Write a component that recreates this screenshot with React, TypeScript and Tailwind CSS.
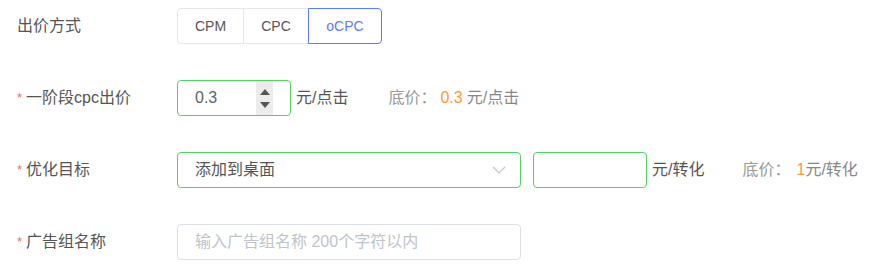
import { useState } from 'react';

const FONT = '"Liberation Sans", "Noto Sans CJK SC", sans-serif';

const MODES = [
  { key: 'CPM', w: 'w-[67px]' },
  { key: 'CPC', w: 'w-[66px]' },
  { key: 'oCPC', w: 'w-[74px]' },
];

function Label({ text, required }: { text: string; required?: boolean }) {
  return (
    <div className="flex w-[177px] shrink-0 items-center pl-[17px] text-[16px] text-[#555]">
      {required && <span className="mr-[4px] text-[13px] text-[#f56c6c]">*</span>}
      <span>{text}</span>
    </div>
  );
}

function Spinner() {
  return (
    <div className="flex h-full w-[17px] flex-col items-center justify-center gap-[7px] bg-[#ececec]">
      <svg width="10" height="6" viewBox="0 0 10 6">
        <path d="M5 0 L10 6 L0 6 Z" fill="#555" />
      </svg>
      <svg width="10" height="6" viewBox="0 0 10 6">
        <path d="M0 0 L10 0 L5 6 Z" fill="#555" />
      </svg>
    </div>
  );
}

export default function App() {
  const [mode, setMode] = useState('oCPC');

  return (
    <div className="flex flex-col gap-[36px] bg-white pt-[8px]" style={{ fontFamily: FONT }}>
      <div className="flex h-[36px] items-center">
        <Label text="出价方式" />
        <div className="flex h-full">
          {MODES.map((m, i) => {
            const active = m.key === mode;
            return (
              <button
                key={m.key}
                type="button"
                onClick={() => setMode(m.key)}
                className={`${m.w} ${i > 0 ? '-ml-px' : 'rounded-l-[4px]'} ${
                  i === MODES.length - 1 ? 'rounded-r-[4px]' : ''
                } ${
                  active
                    ? 'relative z-10 border-[#5b7bf8] text-[#5b7bf8]'
                    : 'border-[#e4e6eb] text-[#555]'
                } h-full border bg-white text-[14px]`}
              >
                {m.key}
              </button>
            );
          })}
        </div>
      </div>

      <div className="flex h-[36px] items-center">
        <Label text="一阶段cpc出价" required />
        <div className="flex h-full w-[114px] items-center rounded-[4px] border border-[#55d163] pl-[17px] pr-[17px]">
          <span className="flex-1 text-[16px] text-[#606266]">0.3</span>
          <Spinner />
        </div>
        <span className="ml-[5px] text-[16px] text-[#555]">元/点击</span>
        <span className="ml-[40px] text-[16px] text-[#999]">底价：</span>
        <span className="ml-[4px] text-[16px] text-[#ff9a2e]">0.3</span>
        <span className="ml-[4px] text-[16px] text-[#888]">元/点击</span>
      </div>

      <div className="flex h-[36px] items-center">
        <Label text="优化目标" required />
        <div className="flex h-full w-[344px] items-center justify-between rounded-[4px] border border-[#55d163] pl-[17px] pr-[14px]">
          <span className="text-[16px] text-[#555]">添加到桌面</span>
          <svg width="14" height="8" viewBox="0 0 14 8" fill="none">
            <path d="M1 1 L7 7 L13 1" stroke="#c0c4cc" strokeWidth="1.2" />
          </svg>
        </div>
        <div className="ml-[12px] h-full w-[114px] rounded-[4px] border border-[#55d163]" />
        <span className="ml-[5px] text-[16px] text-[#555]">元/转化</span>
        <span className="ml-[38px] text-[16px] text-[#999]">底价：</span>
        <span className="ml-[6px] text-[16px] text-[#ff9a2e]">1</span>
        <span className="text-[16px] text-[#888]">元/转化</span>
      </div>

      <div className="flex h-[36px] items-center">
        <Label text="广告组名称" required />
        <input
          placeholder="输入广告组名称 200个字符以内"
          className="h-full w-[344px] rounded-[4px] border border-[#dcdfe6] pl-[17px] text-[16px] text-[#555] outline-none placeholder:text-[#c0c4cc]"
        />
      </div>
    </div>
  );
}
